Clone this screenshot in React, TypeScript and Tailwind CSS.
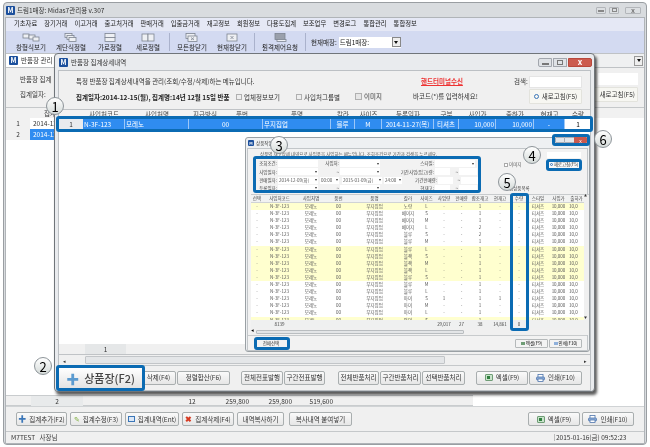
import React from "react";

const FONT = "[font-family:'Noto_Sans_CJK_KR','Noto_Sans',sans-serif]";

function Logo({ small }: { small?: boolean }) {
  return (
    <span className={small ? "flex h-[6px] w-[6px] items-center justify-center rounded-[1px] bg-[#1b4f9c] text-[4px] font-bold text-white" : "flex h-[9px] w-[9px] items-center justify-center rounded-[1px] bg-[#1b4f9c] text-[7px] font-bold leading-none text-white"}>
      M
    </span>
  );
}

function WinCtrl({ small }: { small?: boolean }) {
  if (small) {
    return (
      <div className="flex h-[6px]">
        <span className="w-[10px] rounded-l-[1px] border border-[#a9adb5] bg-[#e3e6ea]" />
        <span className="w-[9px] border-y border-[#a9adb5] bg-[#e3e6ea]" />
        <span className="flex w-[13px] items-center justify-center rounded-r-[1px] bg-[#c9594e] text-[5px] leading-none text-white">x</span>
      </div>
    );
  }
  return (
    <div className="flex h-[9px] gap-[1px]">
      <span className="flex w-[14px] items-end justify-center rounded-l-[2px] border border-[#a2a6ad] bg-[#dfe2e6] pb-[1px]"><i className="h-[2px] w-[7px] border border-[#777]" /></span>
      <span className="flex w-[14px] items-center justify-center border border-[#a2a6ad] bg-[#dfe2e6]"><i className="h-[5px] w-[6px] border border-[#777]" /></span>
      <span className="flex w-[24px] items-center justify-center rounded-r-[2px] border border-[#b8483c] bg-[#cc5b4e] text-[8px] font-bold leading-none text-white">x</span>
    </div>
  );
}

function InactiveCtrl() {
  return (
    <div className="flex h-[7px] items-center">
      <span className="flex h-[7px] w-[10px] items-end justify-center rounded-[1px] border border-[#b3b6ba] bg-[#dcdfe2] pb-[1px]"><i className="h-[2px] w-[6px] border border-[#888]" /></span>
      <span className="ml-[3px] flex h-[7px] w-[10px] items-center justify-center rounded-[1px] border border-[#b3b6ba] bg-[#dcdfe2]"><i className="h-[4px] w-[5px] border border-[#888]" /></span>
      <span className="ml-[6px] flex h-[7px] w-[16px] items-center justify-center rounded-[1px] border border-[#b3b6ba] bg-[#dcdfe2] text-[7px] font-bold leading-none text-[#777]">x</span>
    </div>
  );
}

function Badge({ n, cls }: { n: string; cls: string }) {
  return (
    <div className={`absolute z-40 flex h-[18px] w-[18px] items-center justify-center rounded-full border border-[#8d9499] bg-gradient-to-b from-white to-[#d5dbd9] text-[13px] leading-none text-black ${cls}`}>
      {n}
    </div>
  );
}

function Hi({ cls }: { cls: string }) {
  return <div className={`absolute z-30 rounded-[3px] border-[3px] border-[#0b6bb3] ${cls}`} />;
}

function Excel() {
  return <span className="flex h-[7px] w-[8px] items-center justify-center rounded-[1px] border border-[#6f9d76] bg-[#c9e3cb]"><i className="h-[3px] w-[3px] bg-[#2f7f3e]" /></span>;
}
function Printer() {
  return (
    <svg width="9" height="8" viewBox="0 0 9 8"><rect x="2" y="0.5" width="5" height="3" fill="#fff" stroke="#4f76ad" strokeWidth="0.8" /><rect x="0.5" y="3" width="8" height="3" rx="1" fill="#8fb0db" stroke="#4f76ad" strokeWidth="0.8" /><rect x="2" y="5" width="5" height="2.5" fill="#fff" stroke="#4f76ad" strokeWidth="0.8" /></svg>
  );
}

function Btn({ w, children, cls = "" }: { w: string; children: React.ReactNode; cls?: string }) {
  return (
    <div className={`flex h-[14px] items-center justify-center gap-[3px] whitespace-nowrap rounded-[2px] border border-[#a9aeaf] bg-gradient-to-b from-[#fafafa] to-[#e6e6e6] text-[6.5px] leading-none text-[#333] ${w} ${cls}`}>
      {children}
    </div>
  );
}

const menus = ["기초자료", "장기거래", "이고거래", "출고처거래", "판매거래", "입출금거래", "재고정보", "회원정보", "다용도집계", "보조업무", "변경로그", "통합관리", "통합정보"];

function ToolIcon({ kind }: { kind: number }) {
  const stroke = "#7d8491";
  return (
    <svg width="18" height="9" viewBox="0 0 18 9" fill="#eef0f4" stroke={stroke} strokeWidth="0.8">
      {kind === 0 && <><rect x="1" y="1" width="6" height="4" /><rect x="7" y="2" width="6" height="4" /><rect x="11" y="4" width="6" height="4" /></>}
      {kind === 1 && <><rect x="3" y="0.5" width="7" height="4" /><rect x="5" y="2.5" width="7" height="4" /><rect x="7" y="4.5" width="7" height="4" /></>}
      {kind === 2 && <><rect x="4" y="0.5" width="10" height="4" /><rect x="4" y="4.5" width="10" height="4" /></>}
      {kind === 3 && <><rect x="3" y="1" width="6" height="7" /><rect x="9" y="1" width="6" height="7" /></>}
      {kind === 4 && <><rect x="3" y="0.5" width="9" height="5" /><rect x="5" y="3" width="9" height="5.5" /><path d="M8 4.5l3 2.5M11 4.5l-3 2.5" /></>}
      {kind === 5 && <><rect x="4" y="1" width="10" height="7" /><path d="M7.5 3l3 3M10.5 3l-3 3" /></>}
      {kind === 6 && <><rect x="4" y="0.5" width="10" height="6" fill="#9aa0ab" /><rect x="6" y="6.5" width="9" height="2" /></>}
    </svg>
  );
}

function Tool({ w, k, label }: { w: string; k: number; label: string }) {
  return (
    <div className={`flex flex-col items-center gap-[1px] ${w}`}>
      <ToolIcon kind={k} />
      <span className="whitespace-nowrap text-[6.5px] leading-[8px] text-[#222]">{label}</span>
    </div>
  );
}

const w1Grid = "grid grid-cols-[24px_42px_64px_32px_42px_68px_24px_27px_52px_25px_37px_38px_31px_26px]";
const w2Grid = "grid grid-cols-[12px_33px_30px_25px_47px_20px_17px_18px_17px_20px_20px_18px_20px_21px_15px]";

const w2Head = ["선택", "사입처코드", "사입처명", "품번", "품명", "칼라", "사이즈", "사입량", "판매량", "합조재고", "현재고", "수량", "스타일", "사입가", "출하가"];
const colors = ["노랑", "베이지", "베이지", "베이지", "블루", "블루", "블루", "블랙", "블랙", "블랙", "블루", "블루", "블루", "아이", "아이", "아이", "와인"];
const sizes = ["L", "S", "M", "L", "S", "M", "L", "S", "M", "L", "S", "M", "L", "S", "M", "L", "S"];
const stock = [1, 1, 1, 2, 2, 1, 1, 1, 1, 1, 1, 1, 1, 1, 1, 1, 1];

function isYellow(i: number) {
  return i === 0 || (i >= 6 && i <= 10) || i === 16;
}

function Field({ w, label, lw, arrow, value }: { w: string; lw: string; label?: string; arrow?: boolean; value?: string }) {
  return (
    <div className="flex items-center">
      {label !== undefined && <span className={`whitespace-nowrap pr-[1px] text-right text-[4.5px] leading-none text-[#444] ${lw}`}>{label}</span>}
      <span className={`flex h-[7px] items-center justify-between bg-white px-[1px] text-[4.5px] leading-none text-[#555] ${w}`}>
        <span className="whitespace-nowrap">{value}</span>
        {arrow && <span className="h-0 w-0 border-x-[1.5px] border-t-[2px] border-x-transparent border-t-[#333]" />}
      </span>
    </div>
  );
}

function InnerWindow() {
  return (
    <div className="absolute left-[245px] top-[137px] z-20 flex h-[215px] w-[345px] flex-col rounded-[3px] border border-[#9aa0a4] bg-[#eef0f2]">
      <div className="flex h-[10px] shrink-0 items-center gap-[2px] pl-[2px] pr-[3px]">
        <Logo small />
        <span className="text-[4.5px] leading-none text-[#444]">상품작업</span>
      </div>
      <div className="mx-[1px] flex flex-1 flex-col border border-[#c2c6c9] bg-[#f2f2f2]">
        <div className="flex h-[45px] shrink-0">
          <div className="flex w-[236px] flex-col pl-[8px] pt-[2px]">
            <span className="h-[8px] whitespace-nowrap pl-[4px] text-[4.5px] leading-[6px] text-[#555]">상품별 재고상세 내역으로 사입품을 사입하는 메뉴입니다. 조회조건으로 기간과 검색을 누르세요.</span>
            <div className="flex flex-col gap-[1.3px] pl-[2px] pt-[1px]">
              <div className="flex gap-[2px]">
                <Field lw="w-[20px]" label="조회조건:" w="w-[40px]" />
                <Field lw="w-[20px]" label="사입처:" w="w-[40px]" arrow />
                <Field lw="w-[53px]" label="스타일:" w="w-[40px]" arrow />
              </div>
              <div className="flex gap-[2px]">
                <Field lw="w-[20px]" label="사입일자:" w="w-[40px]" arrow />
                <Field lw="w-[20px]" label="~" w="w-[40px]" arrow />
                <Field lw="w-[53px]" label="기간사입(입고)량:" w="w-[15px]" />
                <Field lw="w-[7px]" label="~" w="w-[18px]" />
              </div>
              <div className="flex gap-[1px]">
                <Field lw="w-[20px]" label="판매일자:" w="w-[40px]" arrow value="2014-12-09(화)" />
                <Field lw="w-[1px]" label="" w="w-[19px]" arrow value="00:00" />
                <Field lw="w-[2px]" label="" w="w-[40px]" arrow value="2015-01-09(금)" />
                <Field lw="w-[1px]" label="" w="w-[18px]" arrow value="24:00" />
                <Field lw="w-[35px]" label="기간판매량:" w="w-[15px]" />
                <Field lw="w-[7px]" label="~" w="w-[18px]" />
              </div>
              <div className="flex gap-[2px]">
                <Field lw="w-[20px]" label="등록일자:" w="w-[40px]" arrow />
                <Field lw="w-[20px]" label="~" w="w-[40px]" arrow />
                <Field lw="w-[53px]" label="현재고:" w="w-[15px]" />
                <Field lw="w-[7px]" label="~" w="w-[18px]" />
              </div>
            </div>
          </div>
          <div className="flex flex-1 flex-col">
            <div className="flex h-[9px] items-end justify-end pr-[6px]"><span className="h-[6px] w-[34px] bg-white" /></div>
            <div className="flex h-[12px] items-center pl-[20px] pt-[1px]">
              <span className="mr-[1px] h-[4px] w-[4px] border border-[#aaa] bg-white" />
              <span className="w-[14px] text-[4.5px] leading-none text-[#555]">이미지</span>
              <div className="ml-[25px] flex h-[8px] w-[32px] items-center justify-center gap-[1px] whitespace-nowrap bg-[#f8f8f8] text-[4.5px] leading-none text-[#333]"><span className="h-[3px] w-[3px] shrink-0 rounded-full border border-[#3a76b8]" />새로고침(F5)</div>
            </div>
            <span className="pl-[25px] pt-[16px] text-[4.5px] leading-none text-[#444]">입상품목록</span>
          </div>
        </div>
        <div className="relative ml-[3px] flex h-[134px] w-[338px] flex-col border-y border-[#c8cbcd] bg-white">
          <div className={`${w2Grid} h-[8px] shrink-0 border-b border-[#d0d3d5] bg-[#f1f2f2]`}>
            {w2Head.map((h) => (
              <span key={h} className="truncate text-center text-[4.5px] leading-[7px] text-[#444]">{h}</span>
            ))}
          </div>
          <div className="h-[117px] shrink-0 overflow-hidden">
            {colors.map((c, i) => (
              <div key={i} className={`${w2Grid} h-[7.1px] text-center text-[4.5px] leading-[7px] text-[#555] ${isYellow(i) ? "bg-[#ffffcf]" : "bg-white"}`}>
                <span>-</span>
                <span>N-3F-123</span>
                <span>모레노</span>
                <span>00</span>
                <span>무지집업</span>
                <span>{c}</span>
                <span>{sizes[i]}</span>
                <span>{i === 13 ? "1" : "-"}</span>
                <span>-</span>
                <span>{stock[i]}</span>
                <span>{i === 13 ? "1" : "-"}</span>
                <span>-</span>
                <span>티셔츠</span>
                <span>10,000</span>
                <span className="text-left">10,0</span>
              </div>
            ))}
          </div>
          <div className={`${w2Grid} h-[8px] shrink-0 bg-[#eff0f0] text-center text-[4.5px] leading-[8px] text-[#444]`}>
            <span /><span>8139</span><span /><span /><span /><span /><span />
            <span>29,017</span><span>27</span><span>38</span><span>14,861</span><span>0</span>
          </div>
          <div className="absolute right-0 top-0 flex h-[125px] w-[5px] flex-col justify-between bg-[#f0f0f0] text-[3px] leading-none text-[#333]"><span>▲</span><span>▼</span></div>
        </div>
        <div className="ml-[3px] flex h-[7px] w-[338px] items-center bg-[#f0f0f0]">
          <span className="w-[5px] text-[3px] leading-none">◀</span>
          <span className="h-[4px] w-[208px] rounded-[1px] border border-[#b9bdc0] bg-[#e3e5e7]" />
        </div>
        <div className="flex flex-1 items-center justify-between border-t border-[#c8cbcd] pl-[8px] pr-[5px]">
          <div className="flex h-[7px] w-[30px] items-center justify-center whitespace-nowrap text-[4.5px] leading-none text-[#333]">전체선택</div>
          <div className="flex gap-[1px]">
            <div className="flex h-[9px] w-[33px] items-center justify-center gap-[1px] rounded-[1px] border border-[#b5b9ba] bg-[#f3f3f3] text-[4.5px] leading-none"><span className="h-[3px] w-[4px] bg-[#6f9d76]" />엑셀(F9)</div>
            <div className="flex h-[9px] w-[33px] items-center justify-center gap-[1px] rounded-[1px] border border-[#b5b9ba] bg-[#f3f3f3] text-[4.5px] leading-none"><span className="h-[3px] w-[4px] bg-[#8fb0db]" />인쇄(F10)</div>
          </div>
        </div>
      </div>
    </div>
  );
}

function DetailWindow() {
  const heads = ["", "사입처코드", "사입처명", "지급방식", "품번", "품명", "칼라", "사이즈", "등록일자", "구분", "사입가", "출하가", "현재고", "수량"];
  const vals = ["1", "N-3F-123", "모레노", "", "00", "무지집업", "블루", "M", "2014-11-27(목)", "티셔츠", "10,000", "10,000", "-", "1"];
  return (
    <div className="absolute left-[54px] top-[53px] z-10 flex h-[339px] w-[541px] flex-col rounded-[4px] border border-[#70757a] bg-[#e9ebee] shadow-[2px_3px_3px_rgba(0,0,0,0.65)]">
      <div className="flex h-[16px] shrink-0 items-center justify-between pl-[4px] pr-[2px]">
        <div className="flex items-center gap-[3px]"><Logo /><span className="text-[6.5px] leading-none text-[#333]">반품장 집계상세내역</span></div>
        <WinCtrl />
      </div>
      <div className="mx-[3px] flex flex-1 flex-col border border-[#bcc0c4] bg-[#f0f0f0]">
        <div className="flex h-[38px] shrink-0">
          <div className="flex w-[295px] flex-col pl-[17px] pt-[6px]">
            <span className="whitespace-nowrap text-[6.5px] leading-[8px] text-[#333]">특정 반품장 집계상세내역을 관리(조회/수정/삭제)하는 메뉴입니다.</span>
            <div className="mt-[8px] flex items-center whitespace-nowrap text-[6.5px] leading-[8px] text-[#333]">
              <b className="w-[160px] font-bold text-[#222]">집계일자:2014-12-15(월), 집계명:14년 12월 15일 반품</b>
              <span className="mr-[2px] h-[6px] w-[6px] border border-[#b0b0b0] bg-[#eee]" />
              <span className="w-[52px]">업체정보보기</span>
              <span className="mr-[2px] h-[6px] w-[6px] border border-[#b0b0b0] bg-[#eee]" />
              <span>사입처그룹별</span>
            </div>
          </div>
          <div className="flex flex-1 flex-col pt-[4px]">
            <div className="flex h-[13px] items-center">
              <span className="ml-[67px] w-[44px] whitespace-nowrap text-[6.5px] font-bold leading-none text-[#ee3333] underline">핸드터미널수신</span>
              <span className="ml-[49px] w-[14px] text-[6.5px] leading-none text-[#333]">검색:</span>
              <span className="ml-[1px] h-[12px] w-[53px] border border-[#e5e5e5] bg-white" />
            </div>
            <div className="mt-[1px] flex items-center">
              <span className="ml-[1px] mr-[2px] h-[7px] w-[7px] border border-[#b0b0b0] bg-[#e6e6e6]" />
              <span className="w-[18px] text-[6.5px] leading-none text-[#333]">이미지</span>
              <span className="ml-[31px] w-[68px] whitespace-nowrap text-[6.5px] leading-none text-[#333]">바코드(*)를 입력하세요!</span>
              <div className="ml-[48px] flex h-[15px] w-[53px] items-center justify-center gap-[3px] whitespace-nowrap rounded-[1px] border border-[#e3e3dd] bg-[#f7f7f2] text-[6.5px] leading-none text-[#333]"><span className="h-[5px] w-[5px] rounded-full border-[1.5px] border-[#3a76b8]" />새로고침(F5)</div>
            </div>
          </div>
        </div>
        <div className="flex h-[246px] shrink-0 flex-col border-y border-[#c0c3c6] bg-white">
          <div className={`${w1Grid} h-[9px] shrink-0 bg-[#f3f3f3]`}>
            {heads.map((h, i) => (
              <span key={i} className="overflow-hidden whitespace-nowrap text-center text-[6.5px] leading-[8px] text-[#444]">{h}</span>
            ))}
          </div>
          <div className={`${w1Grid} h-[11px] shrink-0 items-center bg-[#2f8cf0] text-[6.5px] leading-[11px] text-white`}>
            {vals.map((v, i) => {
              let c = "overflow-hidden whitespace-nowrap border-r border-[#9cc7f7] text-center";
              if (i === 0) c = "bg-[#e9ebee] text-center text-[#333]";
              if (i === 1 || i === 2 || i === 4 || i === 5) c = "overflow-hidden whitespace-nowrap border-r border-[#9cc7f7] pl-[1px] text-left";
              if (i === 10 || i === 11) c = "overflow-hidden whitespace-nowrap border-r border-[#9cc7f7] pr-[1px] text-right";
              if (i === 13) c = "bg-white text-center text-black";
              return <span key={i} className={c}>{v}</span>;
            })}
          </div>
          <div className="flex-1" />
          <div className="flex h-[10px] shrink-0 bg-[#f0f0f0]">
            <span className="w-[26px]" />
            <span className="w-[41px] bg-[#e5e7e8] text-center text-[6.5px] leading-[10px] text-[#333]">1</span>
          </div>
        </div>
        <div className="flex h-[10px] shrink-0 items-center bg-[#f0f0f0] pr-[3px] text-[5px] leading-none text-[#333]">
          <span className="w-[26px] pl-[4px]">◂</span>
          <span className="h-[8px] w-[360px] rounded-[1px] border border-[#c2c5c8] bg-[#e4e6e8]" />
          <span className="ml-auto">▸</span>
        </div>
        <div className="flex flex-1 items-center border-t border-[#c5c8ca]">
          <div className="flex items-center pb-[1px]">
            <Btn w="w-[35px]" cls="ml-[82px]">삭제(F4)</Btn>
            <Btn w="w-[53px]" cls="ml-[1px]">정렬합산(F6)</Btn>
            <Btn w="w-[42px]" cls="ml-[11px]">전체전표발행</Btn>
            <Btn w="w-[41px]" cls="ml-[1px]">구간전표발행</Btn>
            <Btn w="w-[41px]" cls="ml-[13px]">전체반품처리</Btn>
            <Btn w="w-[41px]" cls="ml-[1px]">구간반품처리</Btn>
            <Btn w="w-[43px]" cls="ml-[1px]">선택반품처리</Btn>
            <Btn w="w-[52px]" cls="ml-[11px]"><Excel />엑셀(F9)</Btn>
            <Btn w="w-[53px]" cls="ml-[1px]"><Printer />인쇄(F10)</Btn>
          </div>
        </div>
      </div>
    </div>
  );
}

function MainWindow() {
  return (
    <div className="absolute left-[3px] top-[2px] flex h-[443px] w-[644px] flex-col rounded-[4px] border border-[#9a9ea2] bg-[#d9dcdf]">
      <div className="flex h-[14px] shrink-0 items-center justify-between pl-[2px] pr-[5px]">
        <div className="flex items-center gap-[2px]"><Logo /><span className="text-[6.5px] leading-none text-[#333]">드림1매장: Midas7관리용 v.307</span></div>
        <InactiveCtrl />
      </div>
      <div className="mx-[1px] flex flex-1 flex-col border border-[#b0b4b8] bg-[#f0f0f0]">
        <div className="flex h-[13px] shrink-0 items-center gap-[7px] bg-[#e5e8f5] pl-[8px] text-[6.3px] leading-none text-[#222]">
          {menus.map((m) => <span key={m}>{m}</span>)}
        </div>
        <div className="flex h-[22px] shrink-0 items-center bg-[#d3daf1]">
          <Tool w="w-[40px] ml-[5px]" k={0} label="창형식보기" />
          <Tool w="w-[40px]" k={1} label="계단식정렬" />
          <Tool w="w-[38px]" k={2} label="가로정렬" />
          <Tool w="w-[38px]" k={3} label="세로정렬" />
          <span className="mx-[2px] h-[18px] w-px bg-[#aab2cc]" />
          <Tool w="w-[40px]" k={4} label="모든창닫기" />
          <Tool w="w-[40px]" k={5} label="현재창닫기" />
          <span className="mx-[2px] h-[18px] w-px bg-[#aab2cc]" />
          <Tool w="w-[46px]" k={6} label="원격제어요청" />
          <span className="mx-[2px] h-[18px] w-px bg-[#aab2cc]" />
          <span className="ml-[3px] whitespace-nowrap text-[6.5px] leading-none text-[#222]">현재매장:</span>
          <div className="ml-[2px] flex h-[11px] w-[62px] items-center justify-between bg-white pl-[1px] text-[6.5px] leading-none text-[#222]">
            드림1매장:
            <span className="flex h-[10px] w-[9px] items-center justify-center border border-[#888] bg-[#eee]"><i className="h-0 w-0 border-x-[2px] border-t-[3px] border-x-transparent border-t-[#111]" /></span>
          </div>
        </div>
        <div className="flex h-[15px] shrink-0 items-center justify-between border-y border-[#bfc2c5] bg-[#eff0f1] pr-[1px]">
          <div className="flex h-full items-center gap-[3px] bg-white pl-[3px] pr-[10px]"><Logo /><span className="text-[6.5px] leading-none text-[#333]">반품장 관리</span></div>
          <span className="flex h-[10px] w-[9px] items-center justify-center border border-[#999] bg-[#eee]"><i className="h-0 w-0 border-x-[2px] border-t-[3px] border-x-transparent border-t-[#111]" /></span>
        </div>
        <div className="flex h-[39px] shrink-0 justify-between pr-[6px]">
          <div className="flex flex-col gap-[7px] pl-[14px] pt-[7px] text-[6.5px] leading-[8px] text-[#333]">
            <span>반품장 집계</span>
            <span>집계일자:</span>
          </div>
          <div className="flex w-[50px] flex-col items-end pt-[5px]">
            <span className="h-[12px] w-[40px] bg-white" />
            <div className="mt-[2px] flex h-[15px] w-full items-center justify-end rounded-[1px] border border-[#e3e3dd] bg-[#f7f7f2] pr-[2px] text-[6.5px] leading-none text-[#333]">새로고침(F5)</div>
          </div>
        </div>
        <div className="flex flex-1 flex-col border-t border-[#c5c8ca] bg-white">
          <div className="grid h-[10px] shrink-0 grid-cols-[24px_52px] bg-[#f1f1f1] text-center text-[6.5px] leading-[10px] text-[#333]"><span /><span>집계일자</span></div>
          <div className="grid h-[11px] shrink-0 grid-cols-[24px_52px] text-[6.5px] leading-[11px] text-[#333]"><span className="bg-[#f1f1f1] text-center">1</span><span className="pl-[3px]">2014-12-15</span></div>
          <div className="grid h-[11px] shrink-0 grid-cols-[24px_52px] text-[6.5px] leading-[11px]"><span className="bg-[#f1f1f1] text-center text-[#333]">2</span><span className="bg-[#2f8cf0] pl-[3px] text-white">2014-12-15</span></div>
          <div className="flex-1" />
          <div className="grid h-[11px] w-[467px] shrink-0 grid-cols-[25px_52px_93px_32px_43px_43px_39px_140px] border-y border-[#c9ccce] bg-[#f0f0f0] text-[6.5px] leading-[10px] text-[#333]">
            <span /><span className="bg-[#e8eaeb] text-center">2</span><span />
            <span className="text-center">12</span>
            <span className="pr-[2px] text-right">259,800</span>
            <span className="pr-[2px] text-right">259,800</span>
            <span className="text-right">519,600</span>
            <span />
          </div>
        </div>
        <div className="flex h-[25px] shrink-0 items-center border-t border-[#d0d3d5] pl-[10px]">
          <Btn w="w-[51px]"><span className="text-[8px] font-bold text-[#3a76b8]">✚</span>집계추가(F2)</Btn>
          <Btn w="w-[52px]" cls="ml-[3px]"><span className="text-[7px] text-[#7cae3b]">✎</span>집계수정(F3)</Btn>
          <Btn w="w-[54px]" cls="ml-[3px]"><span className="h-[6px] w-[7px] border border-[#3a76b8] bg-[#dbe7f6]" />집계내역(Ent)</Btn>
          <Btn w="w-[52px]" cls="ml-[3px]"><span className="text-[8px] font-bold text-[#d63a22]">✖</span>집계삭제(F4)</Btn>
          <Btn w="w-[47px]" cls="ml-[3px]">내역복사하기</Btn>
          <Btn w="w-[63px]" cls="ml-[5px]">복사내역 붙여넣기</Btn>
          <Btn w="w-[52px]" cls="ml-[176px]"><Excel />엑셀(F9)</Btn>
          <Btn w="w-[52px]" cls="ml-[2px]"><Printer />인쇄(F10)</Btn>
        </div>
        <div className="flex h-[12px] shrink-0 items-center justify-between border-t border-[#c5c8ca] pl-[5px] pr-[8px] text-[6.5px] leading-none text-[#333]">
          <span>M7TEST&nbsp;&nbsp;&nbsp;사장님</span>
          <span className="w-[82px] border-l border-[#bbb] pl-[1px]">2015-01-16(금) 09:52:23</span>
        </div>
      </div>
    </div>
  );
}

export default function App() {
  return (
    <div className={`relative h-[447px] w-[650px] overflow-hidden bg-white blur-[0.4px] ${FONT}`}>
      <MainWindow />
      <DetailWindow />
      <InnerWindow />

      <Hi cls="left-[56px] top-[116px] h-[16px] w-[537px]" />
      <Hi cls="left-[552px] top-[134px] h-[12px] w-[38px] bg-[#dfe2e6]" />
      <div className="absolute left-[555px] top-[137px] z-30"><WinCtrl small /></div>
      <Hi cls="left-[253px] top-[156px] h-[37px] w-[228px]" />
      <Hi cls="left-[546px] top-[159px] h-[12px] w-[36px]" />
      <Hi cls="left-[510px] top-[193px] h-[138px] w-[19px]" />
      <Hi cls="left-[254px] top-[337px] h-[13px] w-[36px]" />

      <div className="absolute left-[56px] top-[365px] z-30 flex h-[26px] w-[89px] items-center justify-center gap-[5px] rounded-[3px] border-[3px] border-[#0b6bb3] bg-gradient-to-b from-white to-[#e3e3e3] text-[11px] font-medium leading-none text-[#444]">
        <span className="text-[13px] font-bold leading-none text-[#5b9bd0]">✚</span>상품장(F2)
      </div>

      <Badge n="1" cls="left-[46px] top-[97px]" />
      <Badge n="2" cls="left-[34px] top-[357px]" />
      <Badge n="3" cls="left-[270px] top-[136px]" />
      <Badge n="4" cls="left-[523px] top-[146px]" />
      <Badge n="5" cls="left-[498px] top-[173px]" />
      <Badge n="6" cls="left-[594px] top-[130px]" />
    </div>
  );
}
